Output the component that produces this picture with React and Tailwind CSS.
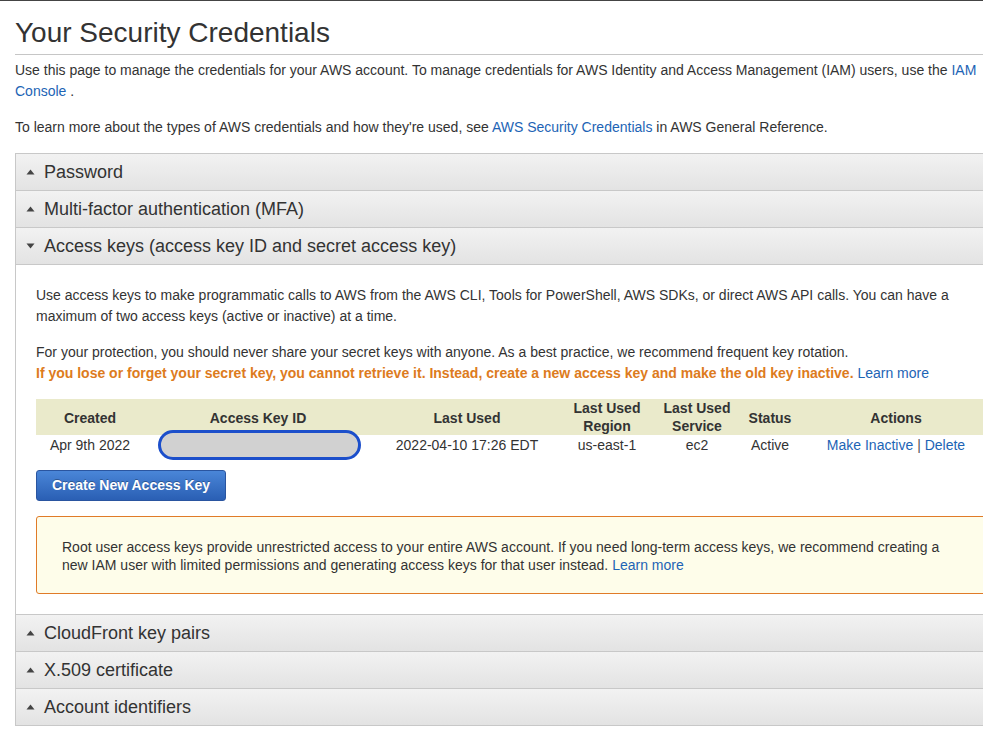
import React from 'react'

const font = { fontFamily: '"Liberation Sans", Arial, sans-serif' }

function Caret({ open }) {
  return (
    <svg width="9" height="6" viewBox="0 0 9 6" className="shrink-0">
      {open ? <path d="M0.5 0.5 L8.5 0.5 L4.5 5.5 Z" fill="#444" /> : <path d="M0.5 5.5 L8.5 5.5 L4.5 0.5 Z" fill="#444" />}
    </svg>
  )
}

function SectionHeader({ title, open }) {
  return (
    <div className="h-[37px] flex items-center gap-[9px] pl-[10px] border-b border-[#c8c8c8] bg-gradient-to-b from-[#f2f2f2] to-[#e3e3e3] text-[18px] text-[#333]">
      <Caret open={open} />
      <span>{title}</span>
    </div>
  )
}

const Link = ({ children }) => <a className="text-[#1d64b5] cursor-pointer">{children}</a>

export default function App() {
  return (
    <div className="w-[983px] h-[738px] overflow-hidden bg-white border-t border-[#444] text-[#333]" style={font}>
      <div className="ml-[15px] w-[1000px]">
        <h1 className="text-[28px] leading-[34px] pt-[15px] pb-[4px] border-b border-[#c6c6c6] text-[#333]">Your Security Credentials</h1>
        <p className="text-[14px] leading-[21px] mt-[5px]">
          Use this page to manage the credentials for your AWS account. To manage credentials for AWS Identity and Access Management (IAM) users, use the <Link>IAM Console</Link> .
        </p>
        <p className="text-[14px] leading-[21px] mt-[15px]">
          To learn more about the types of AWS credentials and how they're used, see <Link>AWS Security Credentials</Link> in AWS General Reference.
        </p>

        <div className="mt-[15px] border-l border-t border-[#c8c8c8]">
          <SectionHeader title="Password" />
          <SectionHeader title="Multi-factor authentication (MFA)" />
          <SectionHeader title="Access keys (access key ID and secret access key)" open />
          <div className="border-b border-[#c8c8c8] px-[20px] pt-[20px] pb-[20px] text-[14px]">
            <p className="leading-[21px]">
              Use access keys to make programmatic calls to AWS from the AWS CLI, Tools for PowerShell, AWS SDKs, or direct AWS API calls. You can have a maximum of two access keys (active or inactive) at a time.
            </p>
            <p className="leading-[21px] mt-[15px]">
              For your protection, you should never share your secret keys with anyone. As a best practice, we recommend frequent key rotation.
              <br />
              <span className="font-bold text-[#dd7b20]">If you lose or forget your secret key, you cannot retrieve it. Instead, create a new access key and make the old key inactive.</span> <Link>Learn more</Link>
            </p>

            <table className="mt-[15px] w-[958px] table-fixed border-collapse text-center">
              <colgroup>
                <col className="w-[108px]" />
                <col className="w-[228px]" />
                <col className="w-[190px]" />
                <col className="w-[90px]" />
                <col className="w-[90px]" />
                <col className="w-[56px]" />
                <col className="w-[196px]" />
              </colgroup>
              <thead>
                <tr className="bg-[#eaeacb] h-[35px] font-bold text-[#333] leading-[18px]">
                  <th className="pt-[2px]">Created</th>
                  <th className="pt-[2px]">Access Key ID</th>
                  <th className="pt-[2px]">Last Used</th>
                  <th>Last Used<br />Region</th>
                  <th>Last Used<br />Service</th>
                  <th className="pt-[2px]">Status</th>
                  <th className="pt-[2px]">Actions</th>
                </tr>
              </thead>
              <tbody>
                <tr className="h-[20px]">
                  <td>Apr 9th 2022</td>
                  <td className="relative">
                    <div className="absolute left-[14px] top-[-5px] w-[203px] h-[30px] rounded-full bg-[#d1d1d1] border-[3px] border-[#1c4fcb]" />
                  </td>
                  <td>2022-04-10 17:26 EDT</td>
                  <td>us-east-1</td>
                  <td>ec2</td>
                  <td>Active</td>
                  <td>
                    <Link>Make Inactive</Link> <span className="text-[#555]">|</span> <Link>Delete</Link>
                  </td>
                </tr>
              </tbody>
            </table>

            <button className="mt-[14px] h-[31px] w-[190px] rounded-[3px] border border-[#2a55a0] bg-gradient-to-b from-[#4a86d8] to-[#2a5fb4] text-white font-bold text-[14px] [text-shadow:0_-1px_0_rgba(0,0,0,0.3)]">
              Create New Access Key
            </button>

            <div className="mt-[15px] border border-[#e07b28] rounded-[3px] bg-[#fefdea] pl-[25px] pr-[50px] pt-[21px] pb-[19px] leading-[18px]">
              Root user access keys provide unrestricted access to your entire AWS account. If you need long-term access keys, we recommend creating a new IAM user with limited permissions and generating access keys for that user instead.  <Link>Learn more</Link>
            </div>
          </div>
          <SectionHeader title="CloudFront key pairs" />
          <SectionHeader title="X.509 certificate" />
          <SectionHeader title="Account identifiers" />
        </div>
      </div>
    </div>
  )
}
